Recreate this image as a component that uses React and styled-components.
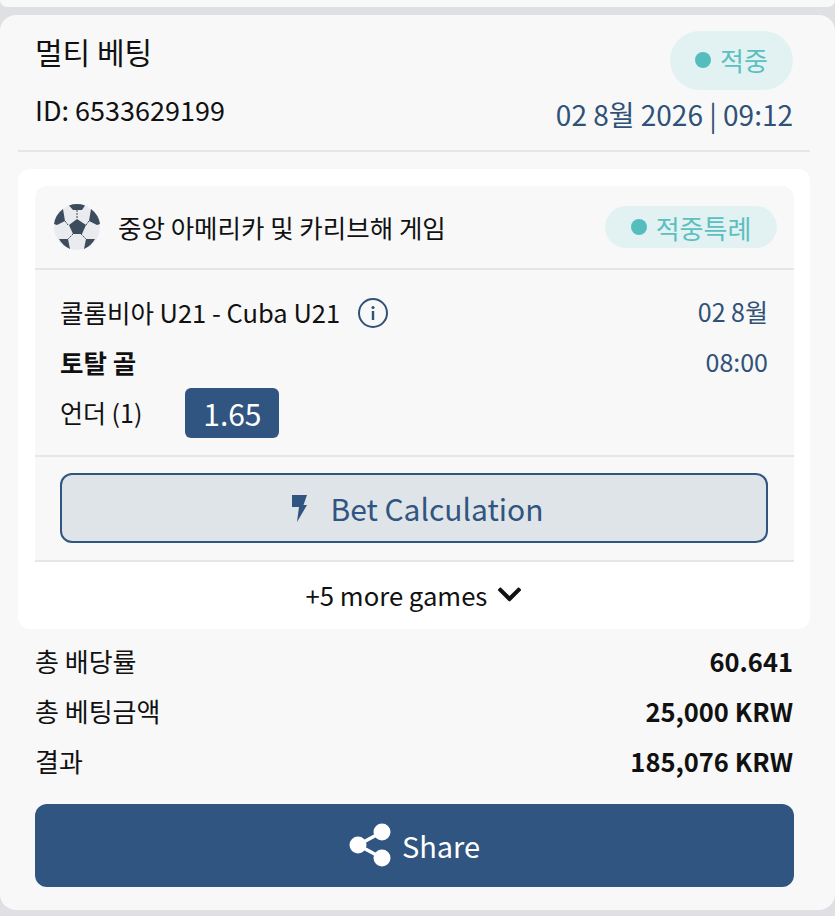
import React from "react";
import styled, { createGlobalStyle } from "styled-components";
import { FaChevronDown } from "react-icons/fa";

const GlobalStyle = createGlobalStyle`
  html, body {
    margin: 0;
    padding: 0;
    background: #dfe0e4;
  }
  body {
    font-family: "Noto Sans CJK KR", "Noto Sans", sans-serif;
    color: #111;
  }
`;

const Page = styled.div`
  width: 835px;
  height: 916px;
  overflow: hidden;
`;

const PrevCard = styled.div`
  height: 7px;
  background: #f8f8f9;
  border-radius: 0 0 14px 14px;
  margin-bottom: 8px;
`;

const Card = styled.div`
  height: 895px;
  background: #f8f8f9;
  border-radius: 16px;
  padding: 16px 25px 0 18px;
  box-sizing: border-box;
`;

const Head = styled.div`
  display: grid;
  grid-template-columns: 1fr auto;
  align-content: start;
  padding: 0 17px 0 17px;
  height: 119px;
  border-bottom: 2px solid #e4e6ea;
`;

const Title = styled.div`
  font-size: 30px;
  line-height: 40px;
`;

const StatusPill = styled.div`
  display: flex;
  align-items: center;
  justify-content: center;
  justify-self: end;
  gap: 9px;
  width: 123px;
  height: 59px;
  padding-bottom: 2px;
  box-sizing: border-box;
  border-radius: 30px;
  background: #e2f2f3;
  color: #5cbfc0;
  font-size: 26px;
`;

const Dot = styled.span`
  width: ${(p) => p.$size}px;
  height: ${(p) => p.$size}px;
  border-radius: 50%;
  background: #56bdbf;
`;

const IdText = styled.div`
  font-size: 27px;
  line-height: 36px;
  margin-top: 2px;
`;

const DateText = styled.div`
  font-size: 28px;
  line-height: 36px;
  color: #2f5276;
  margin-top: 6px;
`;

const Panel = styled.div`
  margin-top: 17px;
  background: #fff;
  border-radius: 12px;
  padding: 17px 16px 0 17px;
  height: 460px;
  box-sizing: border-box;
`;

const Game = styled.div`
  background: #f8f8f9;
  border-radius: 12px 12px 0 0;
`;

const League = styled.div`
  display: flex;
  align-items: center;
  height: 82px;
  padding: 0 17px 0 19px;
  border-bottom: 2px solid #e4e6ea;
  font-size: 25.500px;
`;

const LeagueName = styled.div`
  flex: 1;
  margin: 0 0 2px 18px;
`;

const SpecialPill = styled.div`
  display: flex;
  align-items: center;
  justify-content: center;
  gap: 9px;
  width: 172px;
  height: 42px;
  border-radius: 21px;
  background: #e2f2f3;
  color: #5cbfc0;
  font-size: 26px;
`;

const Match = styled.div`
  display: grid;
  grid-template-columns: 1fr auto;
  padding: 18px 26px 17px 25px;
  border-bottom: 2px solid #e4e6ea;
`;

const MatchName = styled.div`
  display: flex;
  align-items: center;
  gap: 18px;
  height: 50px;
  font-size: 25.500px;
`;

const MatchText = styled.span`
  margin-bottom: 4px;
`;

const MatchSide = styled.div`
  height: 50px;
  font-size: 25px;
  color: #2f5276;
  line-height: 46px;
  text-align: right;
`;

const Market = styled.div`
  height: 50px;
  line-height: 48px;
  font-size: 25.500px;
  font-weight: 700;
`;

const Pick = styled.div`
  display: flex;
  align-items: center;
  gap: 43px;
  height: 50px;
  font-size: 25px;
  grid-column: 1 / 3;
`;

const PickText = styled.span`
  margin-bottom: 3px;
`;

const Odds = styled.div`
  display: flex;
  align-items: center;
  justify-content: center;
  width: 94px;
  height: 50px;
  border-radius: 6px;
  background: #2f5580;
  color: #fff;
  font-size: 30px;
`;

const CalcRow = styled.div`
  padding: 16px 26px 17px 25px;
  border-bottom: 2px solid #e4e6ea;
`;

const CalcButton = styled.button`
  display: flex;
  align-items: center;
  justify-content: center;
  gap: 22px;
  width: 100%;
  height: 70px;
  padding: 0 0 0 7px;
  box-sizing: border-box;
  border: 2px solid #2f5580;
  border-radius: 12px;
  background: #dfe4e8;
  color: #2f5580;
  font-family: inherit;
  font-size: 30px;
`;

const MoreRow = styled.div`
  display: flex;
  align-items: center;
  justify-content: center;
  gap: 9px;
  height: 64px;
  font-size: 25.700px;
`;

const Totals = styled.div`
  padding: 6px 17px 0 17px;
`;

const TotalRow = styled.div`
  display: flex;
  justify-content: space-between;
  align-items: center;
  height: 50px;
  font-size: 26px;
`;

const TotalValue = styled.span`
  font-weight: 700;
  font-size: 25.500px;
`;

const ShareButton = styled.button`
  display: flex;
  align-items: center;
  justify-content: center;
  gap: 11px;
  width: 759px;
  height: 83px;
  margin: 19px 0 0 17px;
  padding: 0 0 2px 0;
  border: none;
  border-radius: 12px;
  background: #2f5580;
  color: #fff;
  font-family: inherit;
  font-size: 29px;
`;

const SoccerBall = () => (
  <svg width="46" height="46" viewBox="0 0 46 46">
    <circle cx="23" cy="23" r="23" fill="#e9ebee" />
    <path d="M23 15l9 6-4 9h-9l-4-9z" fill="#3c4c5c" />
    <path d="M15 1.500a23 23 0 0 1 16 0l-3 4.500h-9z" fill="#3c4c5c" />
    <path d="M9 5l2 12-8 4-3-1a23 23 0 0 1 9-15z" fill="#3c4c5c" />
    <path d="M37 5l-2 12 8 4 3-1a23 23 0 0 0-9-15z" fill="#3c4c5c" />
    <path d="M5 35h9l2 10a23 23 0 0 1-11-10z" fill="#3c4c5c" />
    <path d="M41 35h-9l-2 10a23 23 0 0 0 11-10z" fill="#3c4c5c" />
    <path
      d="M23 6v9M32 21l3-4M14 21l-3-4M19 30l-5 5M27 30l5 5"
      stroke="#3c4c5c"
      strokeWidth="1"
      strokeDasharray="2 1"
    />
  </svg>
);

const InfoIcon = () => (
  <svg width="30" height="30" viewBox="0 0 30 30" fill="none">
    <circle cx="15" cy="15" r="14" stroke="#2f5276" strokeWidth="2" />
    <rect x="13.800" y="13" width="2.400" height="9" fill="#2f5276" />
    <circle cx="15" cy="9.500" r="1.600" fill="#2f5276" />
  </svg>
);

const BoltIcon = () => (
  <svg width="17" height="29" viewBox="0 0 17 29">
    <path d="M1 1h15l-3.500 10h3.500L6 28l2-15H1z" fill="#2f5580" />
  </svg>
);

const ShareIcon = () => (
  <svg width="42" height="44" viewBox="0 0 42 44" fill="none">
    <path d="M33 9L9 22l24 13" stroke="#fff" strokeWidth="3.500" />
    <circle cx="33" cy="9" r="8.500" fill="#fff" />
    <circle cx="9" cy="22" r="8.500" fill="#fff" />
    <circle cx="33" cy="35" r="8.500" fill="#fff" />
  </svg>
);

const totals = [
  ["총 배당률", "60.641"],
  ["총 베팅금액", "25,000 KRW"],
  ["결과", "185,076 KRW"],
];

const App = () => {
  return (
    <Page>
      <GlobalStyle />
      <PrevCard />
      <Card>
        <Head>
          <Title>멀티 베팅</Title>
          <StatusPill>
            <Dot $size={16} />
            적중
          </StatusPill>
          <IdText>ID: 6533629199</IdText>
          <DateText>02 8월 2026 | 09:12</DateText>
        </Head>
        <Panel>
          <Game>
            <League>
              <SoccerBall />
              <LeagueName>중앙 아메리카 및 카리브해 게임</LeagueName>
              <SpecialPill>
                <Dot $size={16} />
                적중특례
              </SpecialPill>
            </League>
            <Match>
              <MatchName>
                <MatchText>콜롬비아 U21 - Cuba U21</MatchText>
                <InfoIcon />
              </MatchName>
              <MatchSide>02 8월</MatchSide>
              <Market>토탈 골</Market>
              <MatchSide>08:00</MatchSide>
              <Pick>
                <PickText>언더 (1)</PickText>
                <Odds>1.65</Odds>
              </Pick>
            </Match>
            <CalcRow>
              <CalcButton>
                <BoltIcon />
                Bet Calculation
              </CalcButton>
            </CalcRow>
          </Game>
          <MoreRow>
            +5 more games
            <FaChevronDown size={27} />
          </MoreRow>
        </Panel>
        <Totals>
          {totals.map(([label, value]) => (
            <TotalRow key={label}>
              <span>{label}</span>
              <TotalValue>{value}</TotalValue>
            </TotalRow>
          ))}
        </Totals>
        <ShareButton>
          <ShareIcon />
          Share
        </ShareButton>
      </Card>
    </Page>
  );
};

export default App;
